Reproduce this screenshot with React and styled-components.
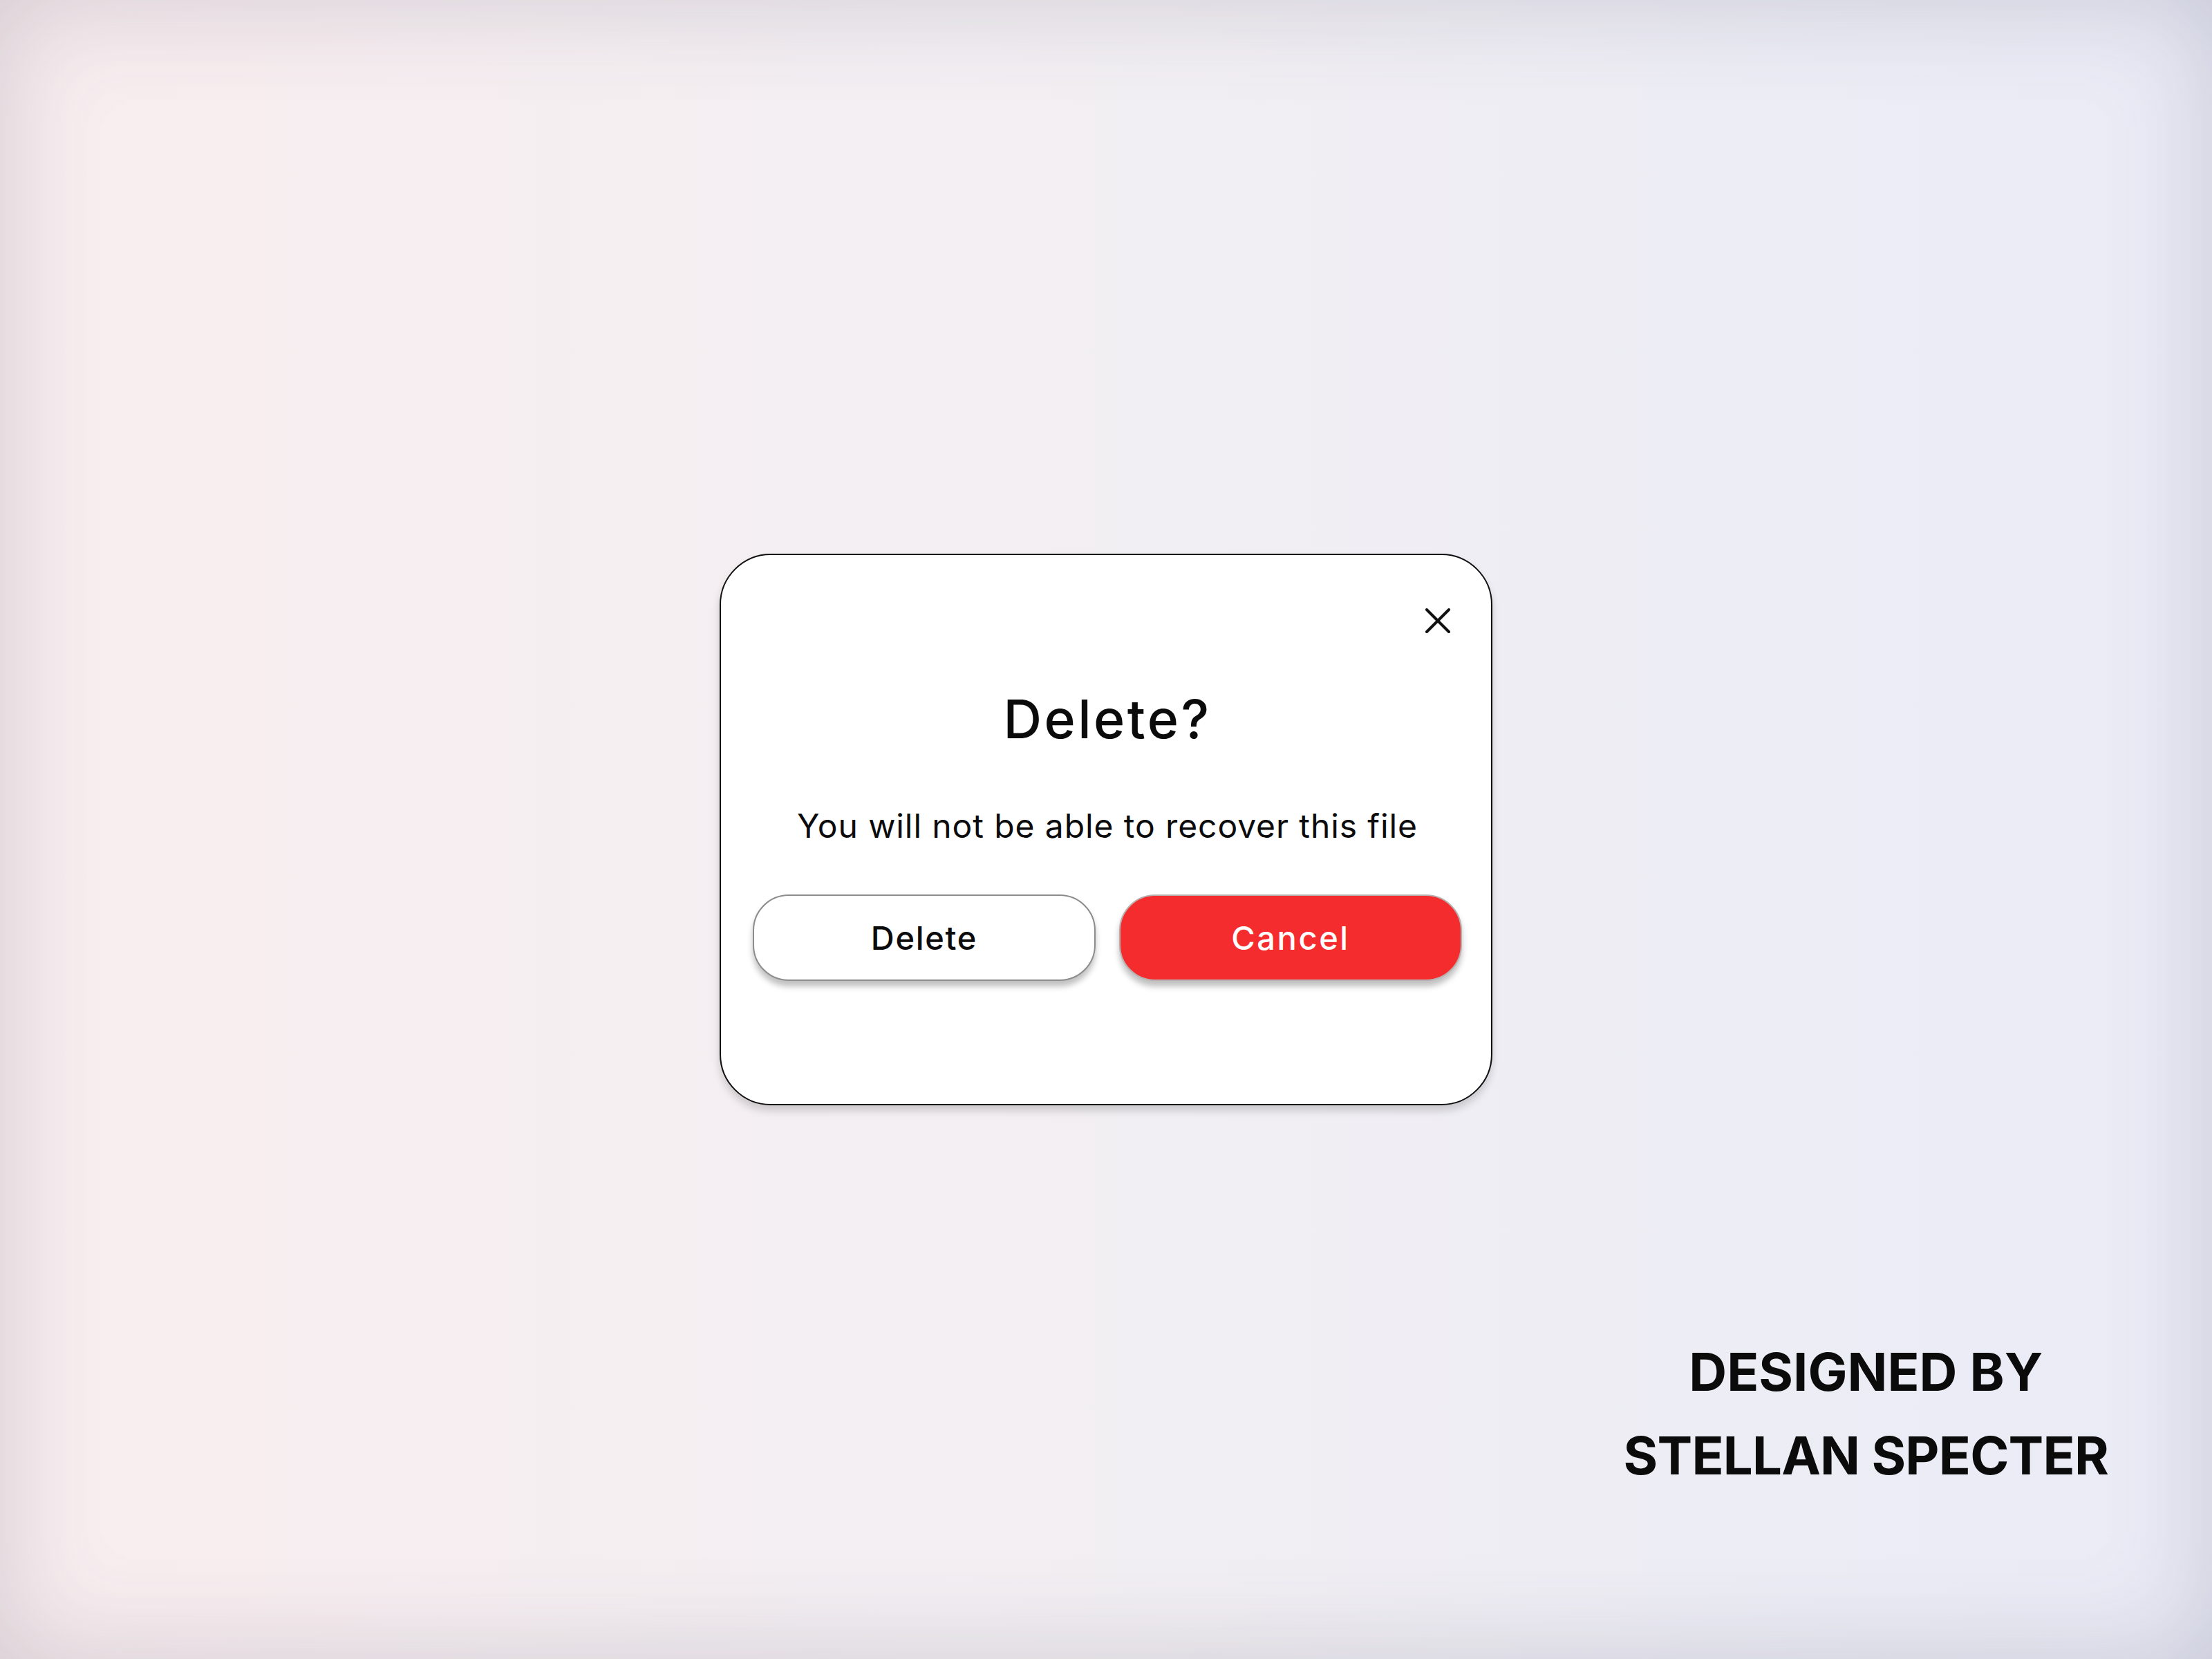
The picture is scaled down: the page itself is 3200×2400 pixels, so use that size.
import styled, { createGlobalStyle } from 'styled-components';

const GlobalStyle = createGlobalStyle`
  html, body {
    margin: 0;
    padding: 0;
  }
  body {
    font-family: Inter, "Liberation Sans", sans-serif;
    color: #0b0b0b;
  }
`

const Page = styled.main`
  width: 100vw;
  height: 100vh;
  box-sizing: border-box;
  display: grid;
  grid-template-rows: 1fr auto 1fr;
  justify-items: center;
  background: linear-gradient(90deg, #f8edef 0%, #f2eff3 50%, #e9ebf6 100%);
  box-shadow: inset 0 0 150px rgba(70, 64, 90, 0.2);
  overflow: hidden;
`
const Dialog = styled.section`
  grid-row: 2;
  width: 1118px;
  box-sizing: border-box;
  padding: 77px 42px 178px 46px;
  background: #ffffff;
  border: 2px solid #111111;
  border-radius: 74px;
  box-shadow: 0 8px 12px rgba(0, 0, 0, 0.16);
  display: flex;
  flex-direction: column;
  align-items: center;
`
const CloseButton = styled.button`
  align-self: flex-end;
  margin-right: 17px;
  width: 36px;
  height: 36px;
  padding: 0;
  border: none;
  background: transparent;
  cursor: pointer;
  display: flex;
  & > svg {
    width: 36px;
    height: 36px;
  }
`
const Title = styled.h2`
  margin: 86px 0 0;
  font-size: 77px;
  line-height: 1;
  font-weight: 500;
  letter-spacing: 3.5px;
`
const Message = styled.p`
  margin: 92px 0 0;
  font-size: 48px;
  line-height: 1;
  font-weight: 400;
  letter-spacing: 0.9px;
`
const Actions = styled.div`
  margin-top: 75px;
  width: 100%;
  display: grid;
  grid-template-columns: 1fr 1fr;
  gap: 34px;
`
const ActionButton = styled.button`
  height: 125px;
  border-radius: 52px;
  font-family: inherit;
  font-size: 47px;
  font-weight: 500;
  letter-spacing: ${({ danger }) => (danger ? '2.6px' : '1.7px')};
  cursor: pointer;
  border: 2px solid ${({ danger }) => (danger ? '#b9b0b0' : '#8c8c8c')};
  background: ${({ danger }) => (danger ? '#f52c2d' : '#ffffff')};
  color: ${({ danger }) => (danger ? '#ffffff' : '#0b0b0b')};
  box-shadow: 0 8px 8px rgba(0, 0, 0, 0.25);
`
const Credit = styled.p`
  grid-row: 3;
  justify-self: end;
  align-self: start;
  margin: 325px 150px 0 0;
  font-size: 76px;
  line-height: 121px;
  font-weight: 700;
  text-align: center;
`
const CreditLine = styled.span`
  display: block;
  letter-spacing: ${({ tight }) => (tight ? '-0.8px' : '0')};
`

export default function App() {
    return (
        <>
            <GlobalStyle />
            <Page>
                <Dialog>
                    <CloseButton aria-label="Close">
                        <svg viewBox="0 0 36 36" fill="none" stroke="#111" strokeWidth="4" strokeLinecap="round">
                            <line x1="2" y1="2" x2="34" y2="34" />
                            <line x1="34" y1="2" x2="2" y2="34" />
                        </svg>
                    </CloseButton>
                    <Title>Delete?</Title>
                    <Message>You will not be able to recover this file</Message>
                    <Actions>
                        <ActionButton>Delete</ActionButton>
                        <ActionButton danger>Cancel</ActionButton>
                    </Actions>
                </Dialog>
                <Credit>
                    <CreditLine>DESIGNED BY</CreditLine>
                    <CreditLine tight>STELLAN SPECTER</CreditLine>
                </Credit>
            </Page>
        </>
    )
}
